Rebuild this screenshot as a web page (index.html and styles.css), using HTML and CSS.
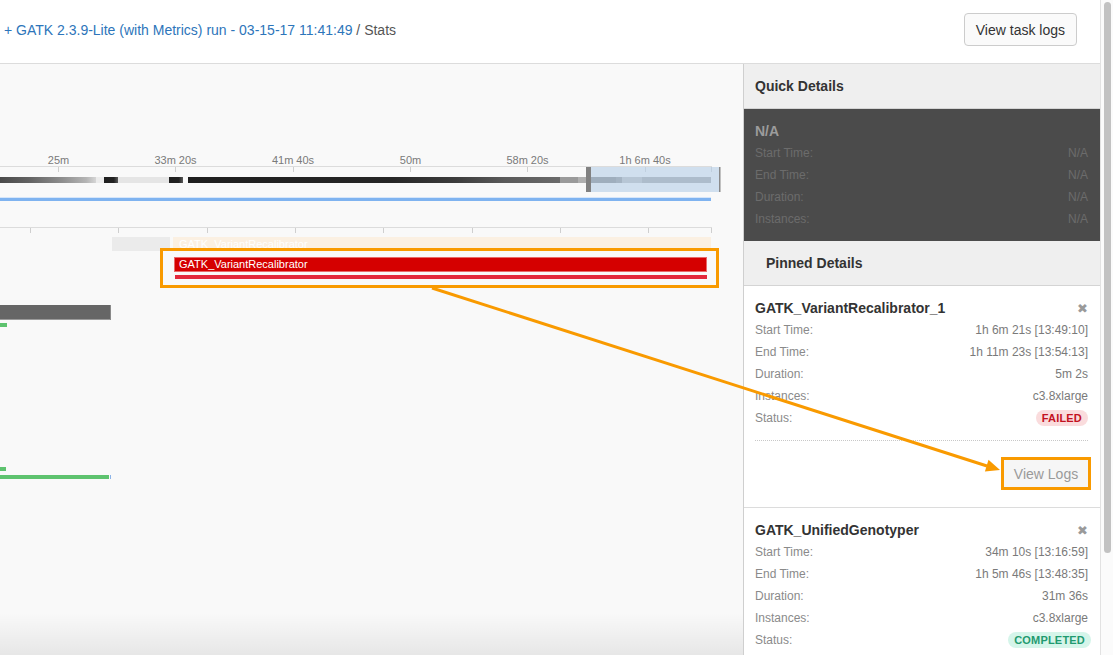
FILE: index.html
```html
<!DOCTYPE html>
<html>
<head>
<meta charset="utf-8">
<title>Stats</title>
<link rel="stylesheet" href="styles.css">
</head>
<body>
<div class="page">
  <div class="main">
    <header class="topbar">
      <div class="crumbs"><a class="crumb-link">+ GATK 2.3.9-Lite (with Metrics) run - 03-15-17 11:41:49</a><span class="crumb-current"> / Stats</span></div>
      <button class="btn">View task logs</button>
    </header>
    <div class="content">
      <div class="chart">
        <svg class="chart-svg" width="743" height="591" viewBox="0 0 743 591">
          <defs>
            <linearGradient id="g1" x1="0" x2="1" y1="0" y2="0">
              <stop offset="0" stop-color="#4a4a4a"/>
              <stop offset="0.3" stop-color="#626262"/>
              <stop offset="0.65" stop-color="#8e8e8e"/>
              <stop offset="0.9" stop-color="#b5b5b5"/>
              <stop offset="1" stop-color="#d6d6d6"/>
            </linearGradient>
            <linearGradient id="g2" x1="0" x2="1" y1="0" y2="0">
              <stop offset="0" stop-color="#1f1f1f"/>
              <stop offset="0.7" stop-color="#222"/>
              <stop offset="1" stop-color="#5a5a5a"/>
            </linearGradient>
            <linearGradient id="g3" x1="0" x2="1" y1="0" y2="0">
              <stop offset="0" stop-color="#1e1e1e"/>
              <stop offset="0.55" stop-color="#262626"/>
              <stop offset="0.72" stop-color="#3c3c3c"/>
              <stop offset="0.85" stop-color="#5a5a5a"/>
              <stop offset="1" stop-color="#6a6a6a"/>
            </linearGradient>
          </defs>
          <g class="axis-labels">
            <text x="58.5" y="100" text-anchor="middle">25m</text>
            <text x="175.5" y="100" text-anchor="middle">33m 20s</text>
            <text x="293" y="100" text-anchor="middle">41m 40s</text>
            <text x="410.5" y="100" text-anchor="middle">50m</text>
            <text x="527.5" y="100" text-anchor="middle">58m 20s</text>
            <text x="645" y="100" text-anchor="middle">1h 6m 40s</text>
          </g>
          <rect x="0" y="102" width="712" height="1" fill="#dcdcdc"/>
          <g fill="#cfcfcf">
            <rect x="58" y="103" width="1" height="5"/>
            <rect x="175" y="103" width="1" height="5"/>
            <rect x="293" y="103" width="1" height="5"/>
            <rect x="410" y="103" width="1" height="5"/>
            <rect x="527" y="103" width="1" height="5"/>
            <rect x="645" y="103" width="1" height="5"/>
            <rect x="711" y="103" width="1" height="5"/>
          </g>
          <!-- overview bar -->
          <rect x="0" y="113" width="96" height="6" fill="url(#g1)"/>
          <rect x="96" y="113" width="8" height="6" fill="#ececec"/>
          <rect x="104" y="113" width="14" height="6" fill="url(#g2)"/>
          <rect x="118" y="113" width="51" height="6" fill="#e5e5e5"/>
          <rect x="169" y="113" width="14" height="6" fill="url(#g2)"/>
          <rect x="188" y="113" width="372" height="6" fill="url(#g3)"/>
          <rect x="560" y="113" width="18" height="6" fill="#9a9a9a"/>
          <rect x="578" y="113" width="10" height="6" fill="#b0b0b0"/>
          <rect x="588" y="113" width="28" height="6" fill="#7a7a7a"/>
          <rect x="616" y="113" width="6" height="6" fill="#8a8a8a"/>
          <rect x="622" y="113" width="20" height="6" fill="#b8b8b8"/>
          <rect x="642" y="113" width="69" height="6" fill="#9d9d9d"/>
          <!-- brush -->
          <rect x="586" y="103" width="134" height="25" fill="#b7cfe6" fill-opacity="0.62"/>
          <rect x="586" y="103" width="5" height="25" fill="#818181"/>
          <rect x="719" y="103" width="1.5" height="25" fill="#8a8a8a"/>
          <!-- blue line -->
          <rect x="0" y="133" width="711" height="1" fill="#d6e6fa"/>
          <rect x="0" y="134" width="711" height="3" fill="#7fb3f0"/>
          <!-- second axis -->
          <rect x="0" y="163" width="712" height="1" fill="#dcdcdc"/>
          <g fill="#cfcfcf">
            <rect x="30" y="164" width="1" height="5"/>
            <rect x="118" y="164" width="1" height="5"/>
            <rect x="207" y="164" width="1" height="5"/>
            <rect x="295" y="164" width="1" height="5"/>
            <rect x="383" y="164" width="1" height="5"/>
            <rect x="472" y="164" width="1" height="5"/>
            <rect x="560" y="164" width="1" height="5"/>
            <rect x="648" y="164" width="1" height="5"/>
            <rect x="711" y="164" width="1" height="5"/>
          </g>
          <!-- rows -->
          <rect x="112" y="173" width="58" height="14" fill="#ebebeb"/>
          <rect x="173" y="173" width="538" height="14" fill="#fbf0e2"/>
          <text class="bar-label" x="179" y="184">GATK_VariantRecalibrator</text>
          <rect x="174.5" y="193.5" width="532" height="14" fill="#d50000" stroke="#e86a6a" stroke-width="1"/>
          <text class="bar-label" x="179" y="204">GATK_VariantRecalibrator</text>
          <rect x="175" y="211" width="532" height="4" fill="#e3283b"/>
          <rect x="0" y="241" width="111" height="15" fill="#666"/>
          <rect x="0" y="255" width="111" height="1" fill="#9a9a9a"/>
          <rect x="110" y="241" width="1" height="15" fill="#8a8a8a"/>
          <rect x="0" y="259" width="7" height="4" fill="#5ec36f"/>
          <rect x="0" y="403" width="6" height="4" fill="#5ec36f"/>
          <rect x="0" y="411" width="109" height="4" fill="#5ec36f"/>
          <rect x="110" y="411" width="1" height="4" fill="#8cb4e8"/>
        </svg>
      </div>
      <aside class="side">
        <div class="panel-head">Quick Details</div>
        <div class="quick">
          <div class="quick-title">N/A</div>
          <div class="row"><span>Start Time:</span><span>N/A</span></div>
          <div class="row"><span>End Time:</span><span>N/A</span></div>
          <div class="row"><span>Duration:</span><span>N/A</span></div>
          <div class="row"><span>Instances:</span><span>N/A</span></div>
        </div>
        <div class="panel-head pinned-head">Pinned Details</div>
        <div class="card">
          <div class="card-title"><span>GATK_VariantRecalibrator_1</span><span class="close">✖</span></div>
          <div class="row"><span>Start Time:</span><span class="val">1h 6m 21s [13:49:10]</span></div>
          <div class="row"><span>End Time:</span><span class="val">1h 11m 23s [13:54:13]</span></div>
          <div class="row"><span>Duration:</span><span class="val">5m 2s</span></div>
          <div class="row"><span>Instances:</span><span class="val">c3.8xlarge</span></div>
          <div class="row"><span>Status:</span><span class="badge badge-failed">FAILED</span></div>
          <div class="card-actions">
            <button class="logs-btn">View Logs</button>
          </div>
        </div>
        <div class="card card-last">
          <div class="card-title"><span>GATK_UnifiedGenotyper</span><span class="close">✖</span></div>
          <div class="row"><span>Start Time:</span><span class="val">34m 10s [13:16:59]</span></div>
          <div class="row"><span>End Time:</span><span class="val">1h 5m 46s [13:48:35]</span></div>
          <div class="row"><span>Duration:</span><span class="val">31m 36s</span></div>
          <div class="row"><span>Instances:</span><span class="val">c3.8xlarge</span></div>
          <div class="row"><span>Status:</span><span class="badge badge-done">COMPLETED</span></div>
        </div>
      </aside>
    </div>
  </div>
  <div class="scrollbar"><div class="thumb"></div></div>
  <svg class="annot" width="1113" height="655" viewBox="0 0 1113 655">
    <rect x="161.5" y="249.5" width="556" height="37" fill="none" stroke="#f99a00" stroke-width="3"/>
    <line x1="432" y1="288" x2="987" y2="466" stroke="#f99a00" stroke-width="3"/>
    <polygon points="1000,470 984.9,471.6 988.5,459.8" fill="#f99a00"/>
  </svg>
</div>
</body>
</html>
```

FILE: styles.css
```css
html, body {
  margin: 0;
  padding: 0;
}
body {
  width: 1113px;
  height: 655px;
  overflow: hidden;
  font-family: "Liberation Sans", Arial, Helvetica, sans-serif;
  color: #333;
  background: #fff;
}
.page {
  position: relative;
  display: flex;
  height: 655px;
}
.main {
  flex: 1;
  display: flex;
  flex-direction: column;
  min-width: 0;
}
.topbar {
  height: 59px;
  padding: 0 23px 4px 4px;
  border-bottom: 1px solid #dcdcdc;
  display: flex;
  align-items: center;
  justify-content: space-between;
  background: #fff;
}
.crumbs {
  font-size: 14px;
  white-space: nowrap;
}
.crumb-link {
  color: #2d75ba;
  text-decoration: none;
}
.crumb-current {
  color: #555;
}
.btn {
  height: 33px;
  padding: 0 11px;
  font-family: inherit;
  font-size: 14px;
  color: #333;
  background: #fafafa;
  border: 1px solid #ccc;
  border-radius: 4px;
}
.content {
  flex: 1;
  display: flex;
  min-height: 0;
}
.chart {
  position: relative;
  width: 743px;
  flex: none;
  background: #f9f9f9;
  overflow: hidden;
}
.chart::after {
  content: "";
  position: absolute;
  left: 0;
  right: 0;
  bottom: 0;
  height: 42px;
  background: linear-gradient(rgba(0,0,0,0), rgba(0,0,0,0.075));
  pointer-events: none;
}
.chart-svg {
  display: block;
}
.axis-labels text {
  font-family: "Liberation Sans", Arial, sans-serif;
  font-size: 11px;
  fill: #7a7a7a;
}
.bar-label {
  font-family: "Liberation Sans", Arial, sans-serif;
  font-size: 11px;
  fill: #fff;
}
.side {
  flex: 1;
  border-left: 1px solid #cfcfcf;
  background: #fff;
  display: flex;
  flex-direction: column;
  min-width: 0;
}
.panel-head {
  height: 44px;
  flex: none;
  display: flex;
  align-items: center;
  padding-left: 11px;
  background: #efefef;
  border-bottom: 1px solid #d4d4d4;
  font-size: 14px;
  font-weight: bold;
  color: #333;
}
.pinned-head {
  padding-left: 22px;
}
.quick {
  background: #4b4b4b;
  padding: 11px 12px 11px 11px;
  flex: none;
}
.quick-title {
  height: 22px;
  line-height: 22px;
  font-size: 14px;
  font-weight: bold;
  color: #9c9c9c;
}
.row {
  height: 22px;
  display: flex;
  align-items: center;
  justify-content: space-between;
  font-size: 12px;
  color: #8a8a8a;
}
.quick .row {
  color: #6c6c6c;
}
.val {
  color: #7a7a7a;
}
.card {
  padding: 11px 12px 20px 11px;
  border-bottom: 1px solid #dcdcdc;
  flex: none;
}
.card-last {
  border-bottom: none;
}
.card-title {
  height: 22px;
  display: flex;
  align-items: center;
  justify-content: space-between;
  font-size: 14px;
  font-weight: bold;
  color: #333;
}
.close {
  font-family: "DejaVu Sans", sans-serif;
  font-size: 13px;
  color: #9a9a9a;
  margin-right: 0;
}
.badge {
  height: 16px;
  line-height: 16px;
  padding: 0 6px;
  border-radius: 8px;
  font-size: 11px;
  font-weight: bold;
  letter-spacing: 0.2px;
}
.badge-failed {
  background: #fadcdd;
  color: #c3121f;
}
.badge-done {
  background: #d5f5ea;
  color: #1f9a70;
  margin-right: -3px;
}
.card-actions {
  margin-top: 11px;
  border-top: 1px dotted #c8c8c8;
  padding-top: 19px;
  display: flex;
  justify-content: flex-end;
}
.logs-btn {
  height: 27px;
  width: 84px;
  padding: 0;
  font-family: inherit;
  font-size: 14px;
  color: #9a9a9a;
  background: #f6f6f6;
  border: none;
  outline: 3px solid #f99a00;
}
.scrollbar {
  width: 13px;
  flex: none;
  border-left: 1px solid #e2e2e2;
  background: #fbfbfb;
  padding: 2px 3px 0 3px;
  box-sizing: border-box;
}
.thumb {
  width: 7px;
  height: 551px;
  border-radius: 4px;
  background: #c2c2c2;
}
.annot {
  position: absolute;
  left: 0;
  top: 0;
  pointer-events: none;
}
```
